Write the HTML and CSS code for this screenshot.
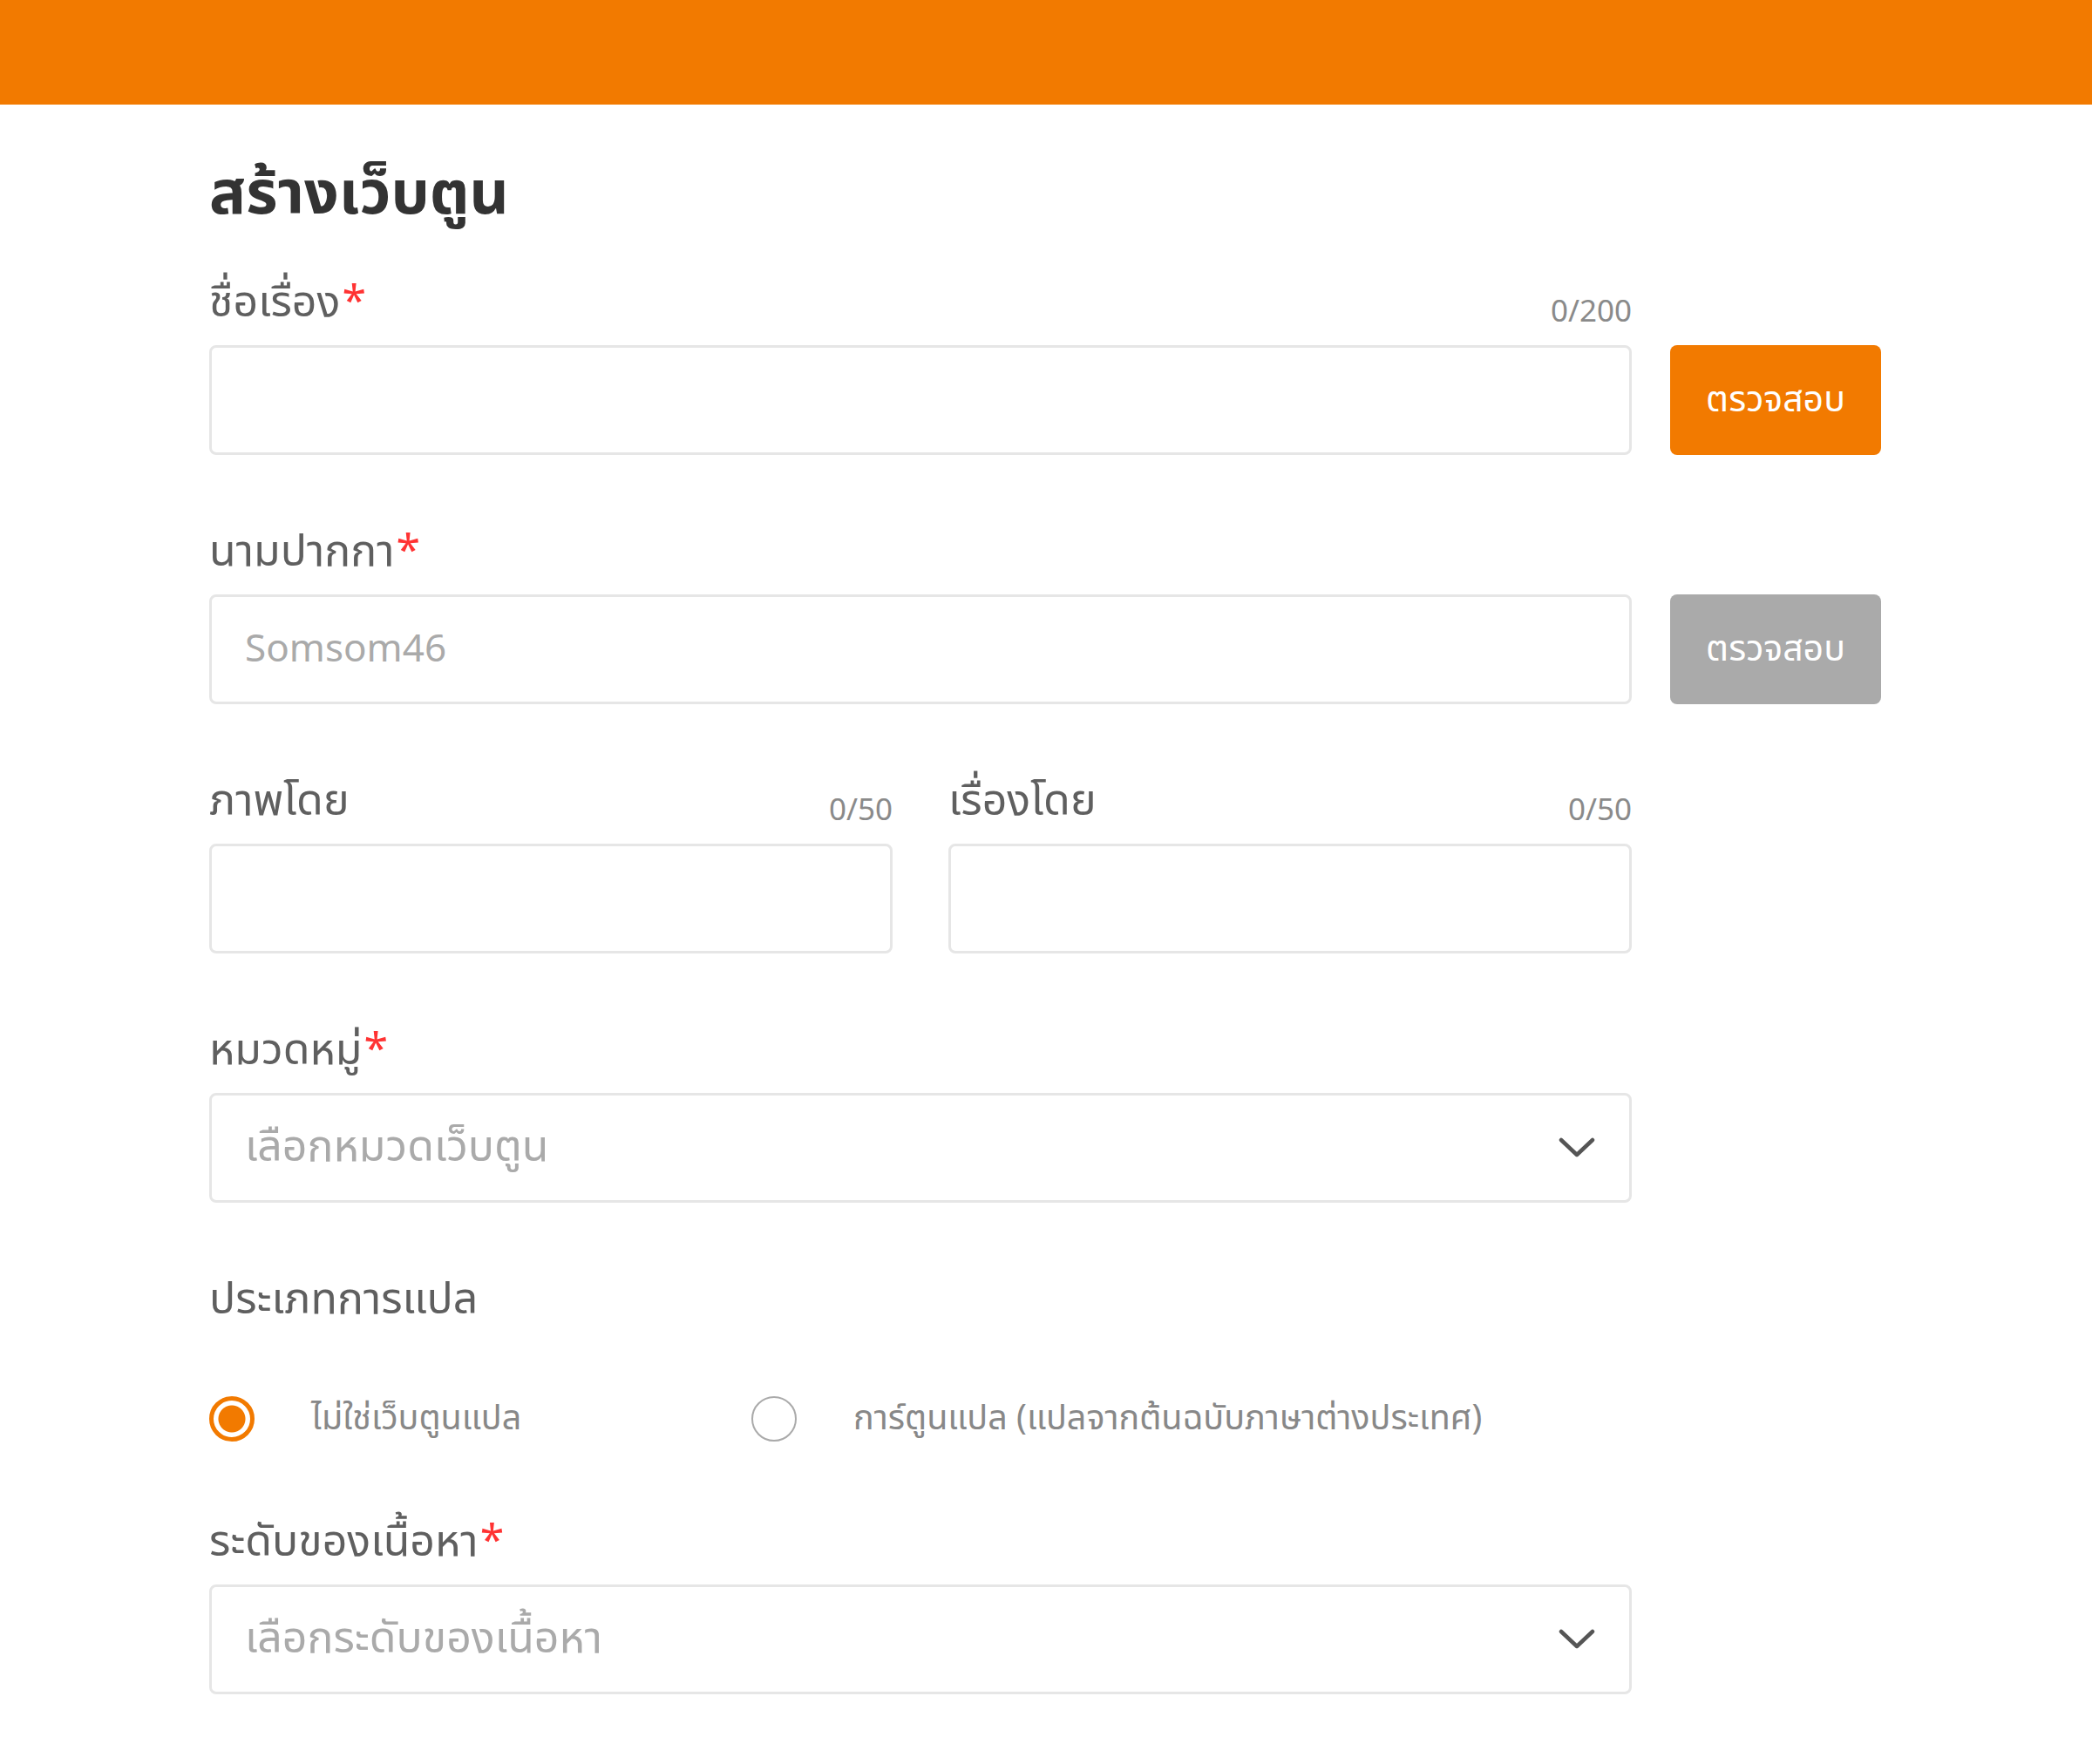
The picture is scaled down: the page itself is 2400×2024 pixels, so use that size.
FILE: index.html
```html
<!DOCTYPE html>
<html lang="th">
<head>
    <meta charset="UTF-8">
    <meta name="viewport" content="width=device-width, initial-scale=1.0">
    <title>สร้างเว็บตูน</title>
    <link rel="stylesheet" href="styles.css">
</head>
<body>
    <header class="topbar"></header>

    <main class="page">
        <h1 class="page-title">สร้างเว็บตูน</h1>

        <div class="field-row">
            <div class="form-group wide">
                <div class="field-head">
                    <label for="title">ชื่อเรื่อง<span class="req">*</span></label>
                    <span class="counter">0/200</span>
                </div>
                <input type="text" id="title" class="text-input">
            </div>
            <button type="button" class="check-btn">ตรวจสอบ</button>
        </div>

        <div class="field-row">
            <div class="form-group wide">
                <div class="field-head">
                    <label for="pen_name">นามปากกา<span class="req">*</span></label>
                </div>
                <input type="text" id="pen_name" class="text-input" placeholder="Somsom46">
            </div>
            <button type="button" class="check-btn disabled">ตรวจสอบ</button>
        </div>

        <div class="field-row half">
            <div class="form-group">
                <div class="field-head">
                    <label for="art_by">ภาพโดย</label>
                    <span class="counter">0/50</span>
                </div>
                <input type="text" id="art_by" class="text-input">
            </div>
            <div class="form-group">
                <div class="field-head">
                    <label for="story_by">เรื่องโดย</label>
                    <span class="counter">0/50</span>
                </div>
                <input type="text" id="story_by" class="text-input">
            </div>
        </div>

        <div class="form-group wide">
            <div class="field-head">
                <label>หมวดหมู่<span class="req">*</span></label>
            </div>
            <div class="select-box">
                <span class="placeholder">เลือกหมวดเว็บตูน</span>
                <svg class="chevron" width="42" height="24" viewBox="0 0 42 24">
                    <polyline points="3,3 21,20 39,3" fill="none" stroke="#555" stroke-width="4.5" stroke-linecap="round" stroke-linejoin="round"/>
                </svg>
            </div>
        </div>

        <div class="radio-group">
            <div class="field-head">
                <label>ประเภทการแปล</label>
            </div>
            <div class="radio-row">
                <label class="radio-option">
                    <span class="radio checked"></span>
                    <span class="radio-text">ไม่ใช่เว็บตูนแปล</span>
                </label>
                <label class="radio-option">
                    <span class="radio"></span>
                    <span class="radio-text">การ์ตูนแปล (แปลจากต้นฉบับภาษาต่างประเทศ)</span>
                </label>
            </div>
        </div>

        <div class="form-group wide">
            <div class="field-head">
                <label>ระดับของเนื้อหา<span class="req">*</span></label>
            </div>
            <div class="select-box">
                <span class="placeholder">เลือกระดับของเนื้อหา</span>
                <svg class="chevron" width="42" height="24" viewBox="0 0 42 24">
                    <polyline points="3,3 21,20 39,3" fill="none" stroke="#555" stroke-width="4.5" stroke-linecap="round" stroke-linejoin="round"/>
                </svg>
            </div>
        </div>
    </main>
</body>
</html>
```

FILE: styles.css
```css
/* Page base */
body {
    margin: 0;
    padding: 0;
    background-color: #fff;
    font-family: "Noto Sans Thai", "Noto Sans Thai UI", "Loma", "Liberation Sans", sans-serif;
    color: #5f5f5f;
}

.topbar {
    height: 120px;
    background-color: #f27a00;
}

.page {
    padding: 64px 240px 0;
}

.page-title {
    margin: 0 0 56px;
    font-size: 70px;
    line-height: 80px;
    font-weight: bold;
    color: #333;
}

/* Form fields */
.field-row {
    display: flex;
    align-items: flex-start;
    gap: 44px;
}

.field-row.half {
    width: 1632px;
    gap: 64px;
}

.field-row.half .form-group {
    flex: 1;
}

.form-group {
    margin-bottom: 84px;
}

.form-group.wide {
    width: 1632px;
}

.field-head {
    display: flex;
    justify-content: space-between;
    align-items: baseline;
    height: 60px;
    line-height: 60px;
    margin-bottom: 16px;
}

.field-head label {
    font-size: 50px;
    color: #5f5f5f;
    position: relative;
    top: -2px;
}

.req {
    color: #f33;
    margin-left: 2px;
}

.counter {
    font-size: 35px;
    color: #8a8a8a;
    position: relative;
    top: 4px;
}

.text-input {
    display: block;
    width: 100%;
    height: 126px;
    box-sizing: border-box;
    padding: 0 38px;
    border: 3px solid #e6e6e6;
    border-radius: 8px;
    font-family: inherit;
    font-size: 44px;
    color: #333;
    outline: none;
}

.text-input::placeholder {
    color: #aaa;
}

.check-btn {
    margin-top: 76px;
    width: 242px;
    height: 126px;
    border: none;
    border-radius: 8px;
    background-color: #f27a00;
    color: #fff;
    font-family: inherit;
    font-size: 41px;
    cursor: pointer;
}

.check-btn.disabled {
    background-color: #aaa;
}

.select-box {
    display: flex;
    align-items: center;
    justify-content: space-between;
    height: 126px;
    box-sizing: border-box;
    padding: 0 39px 0 38px;
    border: 3px solid #e6e6e6;
    border-radius: 8px;
}

.placeholder {
    font-size: 50px;
    color: #aaa;
}

/* Radio choices */
.radio-group {
    margin-bottom: 84px;
}

.radio-row {
    display: flex;
    align-items: center;
    margin-top: 74px;
}

.radio-option {
    display: flex;
    align-items: center;
    gap: 65px;
    min-width: 622px;
}

.radio {
    width: 52px;
    height: 52px;
    box-sizing: border-box;
    border: 2px solid #aaa;
    border-radius: 50%;
}

.radio.checked {
    border: 5px solid #f27a00;
    background: radial-gradient(circle, #f27a00 0 15px, #fff 16px);
}

.radio-text {
    font-size: 39.5px;
    color: #888;
}
```
